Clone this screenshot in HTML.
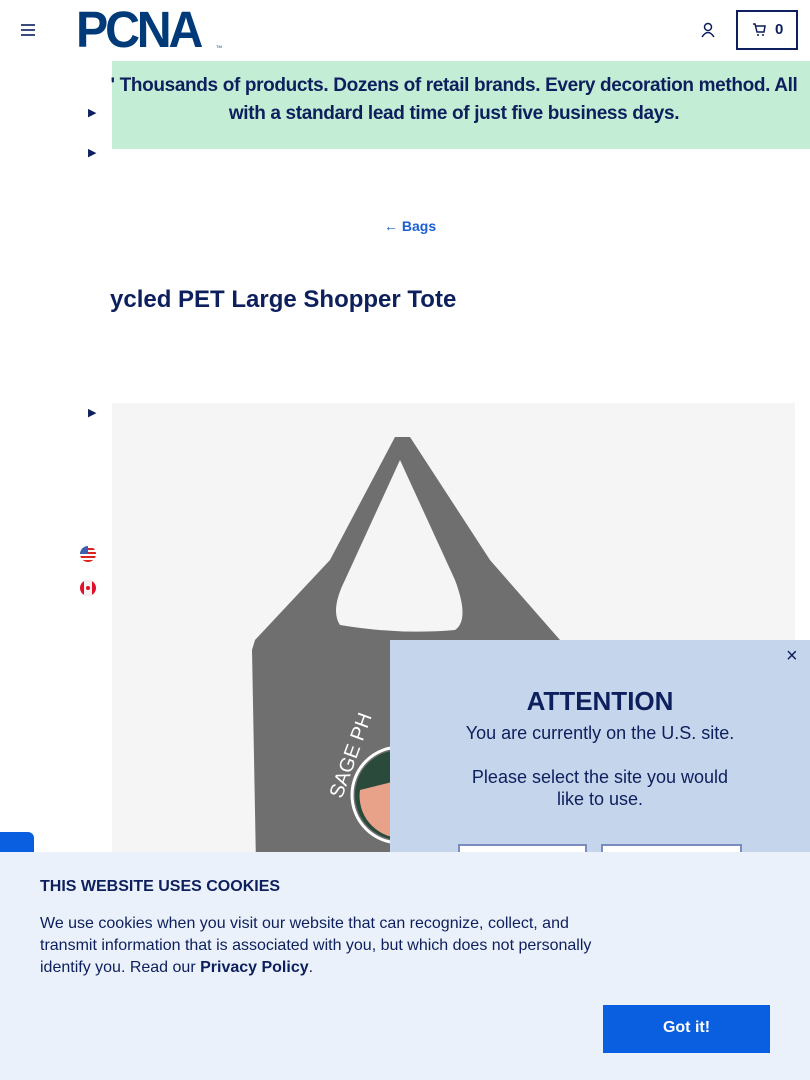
<!DOCTYPE html>
<html><head><meta charset="utf-8"><style>
body{margin:0;width:810px;height:1080px;position:relative;overflow:hidden;font-family:"Liberation Sans",sans-serif;background:#fff;color:#0d1f5c}
.a{position:absolute}
</style></head><body>
<div class="a" style="left:21px;top:24px;width:14px">
<div style="height:2px;background:#3b4a80;margin-bottom:3px"></div><div style="height:2px;background:#3b4a80;margin-bottom:3px"></div><div style="height:2px;background:#3b4a80"></div></div>
<div class="a" style="left:76px;top:2px;font-weight:bold;font-size:46px;color:#003a78;letter-spacing:-3px;transform:scale(1.05,1.1);transform-origin:left top;line-height:50px">PCNA</div>
<div class="a" style="left:216px;top:44px;font-size:4px;color:#003a78">TM</div>
<svg class="a" style="left:700px;top:22px" width="16" height="16" viewBox="0 0 16 16"><circle cx="8" cy="5" r="3.5" fill="none" stroke="#0d1f5c" stroke-width="1.5"/><path d="M2 15 Q8 6 14 15" fill="none" stroke="#0d1f5c" stroke-width="1.5"/></svg>
<div class="a" style="left:736px;top:10px;width:58px;height:36px;border:2px solid #0d1f5c"></div>
<svg class="a" style="left:752px;top:23px" width="14" height="14" viewBox="0 0 14 14"><path d="M1 1h2l2 8h7l1-6H4" fill="none" stroke="#0d1f5c" stroke-width="1.5"/><circle cx="6" cy="12" r="1" fill="#0d1f5c"/><circle cx="11" cy="12" r="1" fill="#0d1f5c"/></svg>
<div class="a" style="left:775px;top:21px;font-weight:bold;font-size:15px">0</div>
<div class="a" style="left:112px;top:61px;width:698px;height:88px;background:#c4edd5"></div>
<div class="a" style="left:104px;top:72px;width:700px;text-align:center;font-weight:bold;font-size:19px;line-height:28px;color:#0d1f5c;white-space:nowrap;letter-spacing:-0.35px"><div>' Thousands of products. Dozens of retail brands. Every decoration method. All</div><div>with a standard lead time of just five business days.</div></div>
<div class="a" style="left:88px;top:106px;font-size:11px">▶</div>
<div class="a" style="left:88px;top:146px;font-size:11px">▶</div>
<div class="a" style="left:88px;top:406px;font-size:11px">▶</div>
<div class="a" style="left:384px;top:218px;font-weight:bold;font-size:14px;color:#1a5fd6">← Bags</div>
<div class="a" style="left:110px;top:286px;font-weight:bold;font-size:24px;color:#0d1f5c">ycled PET Large Shopper Tote</div>
<div class="a" style="left:112px;top:403px;width:683px;height:677px;background:#f5f5f5"></div>
<svg class="a" style="left:112px;top:403px" width="683" height="677" viewBox="112 403 683 677">
<path d="M255 640 L330 560 L395 437 L410 437 L490 560 L560 640 L560 1080 L260 1080 L252 650 Z M340 625 Q330 610 345 580 L400 460 L455 580 Q470 620 455 630 Q400 635 340 625 Z" fill="#6f6f6f" fill-rule="evenodd"/>
<circle cx="400" cy="795" r="45" fill="#2a4a3c"/><path d="M360 790 A42 42 0 0 0 400 838 L400 780 Z" fill="#e9a28a"/>
<circle cx="400" cy="795" r="48" fill="none" stroke="#fff" stroke-width="3"/>
<text x="335" y="790" fill="#fff" font-size="20" font-family="Liberation Sans" transform="rotate(-70 345 790)">SAGE PH</text>
</svg>
<svg class="a" style="left:80px;top:546px" width="16" height="16"><clipPath id="c"><circle cx="8" cy="8" r="8"/></clipPath><g clip-path="url(#c)"><rect width="16" height="16" fill="#fff"/><rect y="2" width="16" height="2" fill="#d22"/><rect y="6" width="16" height="2" fill="#d22"/><rect y="10" width="16" height="2" fill="#d22"/><rect y="14" width="16" height="2" fill="#d22"/><rect width="8" height="8" fill="#3b5fb0"/></g></svg>
<svg class="a" style="left:80px;top:580px" width="16" height="16"><clipPath id="d"><circle cx="8" cy="8" r="8"/></clipPath><g clip-path="url(#d)"><rect width="16" height="16" fill="#e0102a"/><rect x="4" width="8" height="16" fill="#f2f2f2"/><circle cx="8" cy="8" r="2" fill="#e0102a"/></g></svg>
<div class="a" style="left:0;top:832px;width:34px;height:30px;background:#0a5fe0;border-radius:0 6px 0 0"></div>
<div class="a" style="left:390px;top:640px;width:420px;height:240px;background:#c5d5ec"></div>
<div class="a" style="left:786px;top:645px;font-size:20px;color:#0d1f5c">×</div>
<div class="a" style="left:390px;top:686px;width:420px;text-align:center;font-weight:bold;font-size:26px">ATTENTION</div>
<div class="a" style="left:390px;top:722px;width:420px;text-align:center;font-size:18px;line-height:22px">You are currently on the U.S. site.<br><br>Please select the site you would<br>like to use.</div>
<div class="a" style="left:458px;top:844px;width:125px;height:20px;border:2px solid #7a8cc0;background:#fff"></div>
<div class="a" style="left:601px;top:844px;width:137px;height:20px;border:2px solid #7a8cc0;background:#fff"></div>
<div class="a" style="left:0;top:852px;width:810px;height:228px;background:#eaf1fa"></div>
<div class="a" style="left:40px;top:878px;font-weight:bold;font-size:16px;color:#0d1f5c">THIS WEBSITE USES COOKIES</div>
<div class="a" style="left:40px;top:913px;width:570px;font-size:16px;line-height:22px;color:#0d1f5c">We use cookies when you visit our website that can recognize, collect, and transmit information that is associated with you, but which does not personally identify you. Read our <b>Privacy Policy</b>.</div>
<div class="a" style="left:603px;top:1005px;width:167px;height:48px;background:#0a5fe0;color:#fff;font-weight:bold;font-size:16px;text-align:center;line-height:46px">Got it!</div>
</body></html>
